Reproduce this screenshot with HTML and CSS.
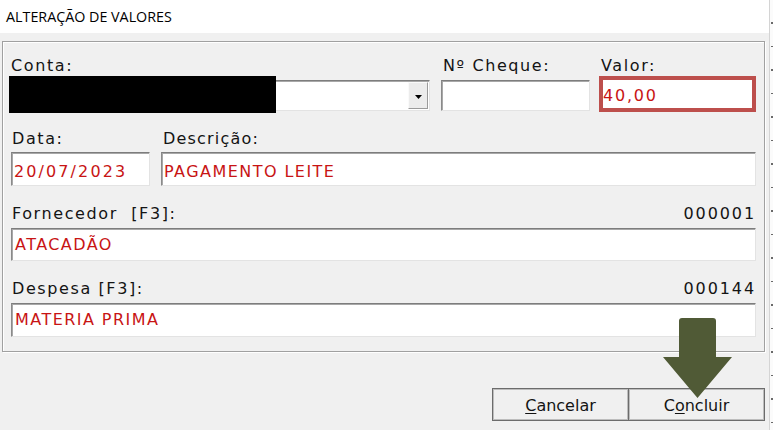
FILE: index.html
```html
<!DOCTYPE html>
<html lang="pt">
<head>
<meta charset="utf-8">
<title>Alteração de Valores</title>
<link rel="stylesheet" href="styles.css">
</head>
<body>
<div class="window">
  <div class="titlebar">ALTERAÇÃO DE VALORES</div>
  <div class="content">
    <div class="group">
      <div class="row row1">
        <div class="field f-conta">
          <div class="label">Conta:</div>
          <div class="combo">
            <span class="redact"></span>
            <div class="combo-btn">
              <svg width="7" height="4" viewBox="0 0 7 4"><path d="M0 0H7L3.5 4Z" fill="#000"/></svg>
            </div>
          </div>
        </div>
        <div class="field f-cheque">
          <div class="label">Nº Cheque:</div>
          <div class="box"></div>
        </div>
        <div class="field f-valor">
          <div class="label">Valor:</div>
          <div class="box focused"><span class="val num">40,00</span></div>
        </div>
      </div>
      <div class="row row2">
        <div class="field f-data">
          <div class="label">Data:</div>
          <div class="box"><span class="val num">20/07/2023</span></div>
        </div>
        <div class="field f-desc">
          <div class="label">Descrição:</div>
          <div class="box"><span class="val">PAGAMENTO LEITE</span></div>
        </div>
      </div>
      <div class="row row3">
        <div class="field f-full">
          <div class="label split"><span>Fornecedor&nbsp; [F3]:</span><span class="code">000001</span></div>
          <div class="box"><span class="val">ATACADÃO</span></div>
        </div>
      </div>
      <div class="row row4">
        <div class="field f-full">
          <div class="label split"><span>Despesa [F3]:</span><span class="code">000144</span></div>
          <div class="box"><span class="val">MATERIA PRIMA</span></div>
        </div>
      </div>
    </div>
    <div class="buttons">
      <div class="btn"><span><u>C</u>ancelar</span></div>
      <div class="btn"><span>C<u>o</u>ncluir</span></div>
    </div>
  </div>
  <svg class="arrow" width="70" height="81" viewBox="0 0 70 81">
    <path d="M19 0H50Q53 0 53 3V39H69L34.5 80L0 39H16V3Q16 0 19 0Z" fill="#505a36"/>
  </svg>
</div>
<div class="edge"></div>
</body>
</html>
```
FILE: styles.css
```css
* { box-sizing: border-box; margin: 0; padding: 0; }
html, body { width: 773px; height: 430px; overflow: hidden; }
body {
  display: flex;
  background: #fff;
  font-family: "DejaVu Sans", Verdana, sans-serif;
  color: #141414;
}
.window {
  position: relative;
  width: 770px;
  height: 430px;
  background: #f0f0f0;
  border-right: 1px solid #d4d4d4;
}
.edge {
  flex: 1;
  background-color: #fbfbfb;
  background-image: repeating-linear-gradient(to bottom, transparent 0 22px, #6a6a6a 22px 23.5px);
  background-size: 2px 100%;
  background-repeat: no-repeat;
  background-position: right top;
}
.titlebar {
  height: 33px;
  background: #fff;
  padding: 7px 0 0 6px;
  font-family: "Open Sans", sans-serif;
  font-size: 14.3px;
  line-height: 20px;
  color: #000;
}
.content { padding: 8px 0 0 2px; }
.group {
  width: 763px;
  height: 311px;
  border: 1px solid #a0a0a0;
  box-shadow: inset 1px 1px 0 #fff, 1px 1px 0 #fff;
  padding: 15px 0 0 6px;
}
.row { display: flex; }
.row1 { height: 73px; }
.row2 { height: 75px; padding-left: 2px; }
.row3 { height: 75px; padding-left: 2px; }
.row4 { height: 60px; padding-left: 2px; }
.field { display: flex; flex-direction: column; }
.label {
  height: 18px;
  line-height: 18px;
  font-size: 16px;
  letter-spacing: 1.6px;
  white-space: nowrap;
  padding-left: 2px;
}
.split { display: flex; justify-content: space-between; padding-left: 1px; }
.code { letter-spacing: 1.9px; }
.val {
  font-size: 16px;
  line-height: 18px;
  letter-spacing: 1.45px;
  color: #c81414;
  white-space: nowrap;
}
.val.num { letter-spacing: 2.1px; }
.box {
  background: #fff;
  border: 1px solid;
  border-color: #7d7d7d #e3e3e3 #e3e3e3 #8a8a8a;
  box-shadow: inset 1px 1px 0 #a8a8a8;
  padding: 6px 0 0 3px;
}
.f-conta { width: 421px; }
.f-cheque { width: 149px; margin-left: 11px; }
.f-valor { width: 157px; margin-left: 9px; }
.combo {
  position: relative;
  margin-top: 5px;
  height: 31px;
  display: flex;
  justify-content: flex-end;
  background: #fff;
  border: 1px solid;
  border-color: #7d7d7d #e3e3e3 #e3e3e3 #8a8a8a;
  box-shadow: inset 1px 1px 0 #a8a8a8;
  padding: 1px 1px 1px 0;
}
.redact {
  position: absolute;
  left: -1px;
  top: -5px;
  width: 267px;
  height: 37px;
  background: #000;
}
.combo-btn {
  width: 20px;
  height: 27px;
  background: #ececec;
  border: 1px solid;
  border-color: #fafafa #9a9a9a #9a9a9a #fafafa;
  display: flex;
  align-items: center;
  justify-content: center;
  padding-top: 2px;
}
.f-cheque .box { margin-top: 5px; height: 31px; }
.f-valor .box.focused {
  margin-top: 1px;
  height: 36px;
  border: 4px solid #bd4f4c;
  box-shadow: none;
  padding: 6px 0 0 0;
}
.f-valor .val.num { letter-spacing: 1.8px; }
.f-data { width: 139px; }
.f-data .label { padding-left: 1px; }
.f-desc { width: 595px; margin-left: 11px; }
.f-desc .label { letter-spacing: 1.2px; }
.row2 .box { margin-top: 4px; height: 34px; padding: 9px 0 0 2px; }
.f-full { width: 745px; }
.row3 .box { margin-top: 5px; height: 33px; padding-top: 6px; }
.row4 .box { margin-top: 5px; height: 34px; padding-top: 6px; }
.buttons {
  display: flex;
  justify-content: flex-end;
  width: 763px;
  margin-top: 36px;
}
.btn {
  width: 137px;
  height: 33px;
  border: 1px solid #6c6c6c;
  box-shadow: inset 0 0 0 1px #bdbdbd;
  background: #f0f0f0;
  font-size: 16px;
  line-height: 18px;
  display: flex;
  align-items: center;
  justify-content: center;
  padding-top: 2px;
  color: #141414;
}
.btn + .btn { margin-left: -1px; }
.btn u { text-underline-offset: 2px; }
.arrow { position: absolute; left: 663px; top: 318px; }
```
